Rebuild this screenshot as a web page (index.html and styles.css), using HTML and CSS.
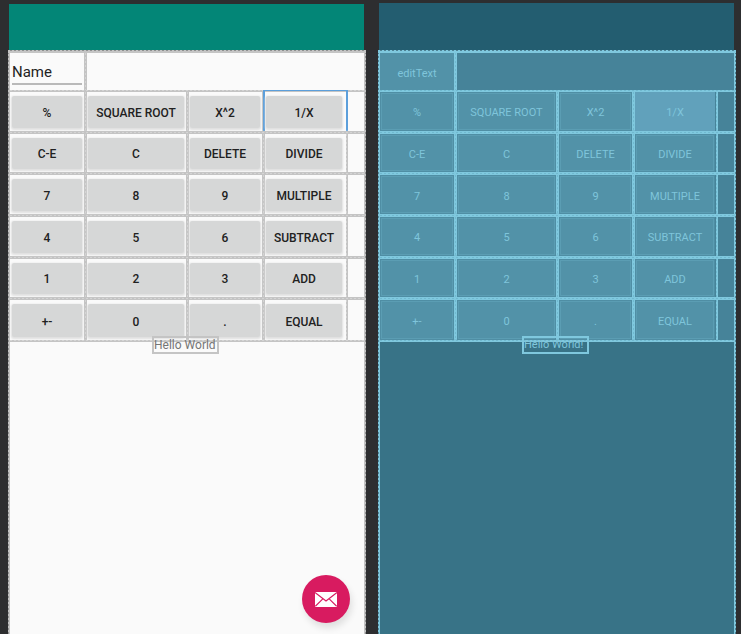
FILE: index.html
```
<!DOCTYPE html>
<html lang="en">
<head>
<meta charset="utf-8">
<title>Calculator layout</title>
<link rel="stylesheet" href="styles.css">
</head>
<body>
<main class="editor">
  <section class="pane design" aria-label="Design">
    <header class="appbar"></header>
    <div class="content">
      <form class="keys">
        <div class="row"><div class="cell field"><input class="name" type="text" value="Name" aria-label="Name"></div></div>
        <div class="row"><div class="cell"><button type="button">%</button></div><div class="cell"><button type="button">SQUARE ROOT</button></div><div class="cell"><button type="button">X^2</button></div><div class="cell selected"><button type="button">1/X</button></div></div>
        <div class="row"><div class="cell"><button type="button">C-E</button></div><div class="cell"><button type="button">C</button></div><div class="cell"><button type="button">DELETE</button></div><div class="cell"><button type="button">DIVIDE</button></div></div>
        <div class="row"><div class="cell"><button type="button">7</button></div><div class="cell"><button type="button">8</button></div><div class="cell"><button type="button">9</button></div><div class="cell"><button type="button">MULTIPLE</button></div></div>
        <div class="row"><div class="cell"><button type="button">4</button></div><div class="cell"><button type="button">5</button></div><div class="cell"><button type="button">6</button></div><div class="cell"><button type="button">SUBTRACT</button></div></div>
        <div class="row"><div class="cell"><button type="button">1</button></div><div class="cell"><button type="button">2</button></div><div class="cell"><button type="button">3</button></div><div class="cell"><button type="button">ADD</button></div></div>
        <div class="row"><div class="cell"><button type="button">+-</button></div><div class="cell"><button type="button">0</button></div><div class="cell"><button type="button">.</button></div><div class="cell"><button type="button">EQUAL</button></div></div>
      </form>
      <p class="hello">Hello World</p>
      <button class="fab" type="button" aria-label="Send mail">
        <svg viewBox="0 0 22 15" width="22" height="15" aria-hidden="true">
          <path fill="#fff" d="M0 0h22v15H0z"/>
          <path fill="none" stroke="#d81b60" stroke-width="1.2" d="M0 .6 11 9 22 .6M.3 14.4 7.8 6.8M21.7 14.4 14.2 6.8"/>
        </svg>
      </button>
    </div>
  </section>
  <section class="pane blueprint" aria-label="Blueprint">
    <header class="appbar"></header>
    <div class="content">
      <form class="keys">
        <div class="row"><div class="cell field"><input class="name" type="text" value="editText" aria-label="editText"></div></div>
        <div class="row"><div class="cell"><button type="button">%</button></div><div class="cell"><button type="button">SQUARE ROOT</button></div><div class="cell"><button type="button">X^2</button></div><div class="cell selected"><button type="button">1/X</button></div></div>
        <div class="row"><div class="cell"><button type="button">C-E</button></div><div class="cell"><button type="button">C</button></div><div class="cell"><button type="button">DELETE</button></div><div class="cell"><button type="button">DIVIDE</button></div></div>
        <div class="row"><div class="cell"><button type="button">7</button></div><div class="cell"><button type="button">8</button></div><div class="cell"><button type="button">9</button></div><div class="cell"><button type="button">MULTIPLE</button></div></div>
        <div class="row"><div class="cell"><button type="button">4</button></div><div class="cell"><button type="button">5</button></div><div class="cell"><button type="button">6</button></div><div class="cell"><button type="button">SUBTRACT</button></div></div>
        <div class="row"><div class="cell"><button type="button">1</button></div><div class="cell"><button type="button">2</button></div><div class="cell"><button type="button">3</button></div><div class="cell"><button type="button">ADD</button></div></div>
        <div class="row"><div class="cell"><button type="button">+-</button></div><div class="cell"><button type="button">0</button></div><div class="cell"><button type="button">.</button></div><div class="cell"><button type="button">EQUAL</button></div></div>
      </form>
      <p class="hello">Hello World!</p>
    </div>
  </section>
</main>
</body>
</html>
```
FILE: styles.css
```
* {
  box-sizing: border-box;
}

body {
  margin: 0;
  background: #2d2e30;
  font-family: Roboto, "Liberation Sans", sans-serif;
}

.editor {
  display: flex;
  gap: 12px;
  min-height: 100vh;
  padding: 0 5px 0 8px;
}

.pane {
  flex: 1;
  display: flex;
  flex-direction: column;
  padding-top: 4px;
}

.design {
  --line: #c4c4c4;
  --dash: #d4d4d4;
  --edge: #8f9090;
  --bar: #038677;
  --screen: #fafafa;
  --table: #fafafa;
}

.blueprint {
  --line: #7fc8de;
  --dash: #70b9cf;
  --edge: #4f8395;
  --bar: #235d70;
  --screen: #387387;
  --table: #468399;
  padding-top: 3px;
}

.appbar {
  flex: 0 0 46px;
  margin: 0 2px 0 1px;
  background: var(--bar);
}

.blueprint .appbar {
  flex-basis: 47px;
}

/* Outlines are a solid line with a row of dashes along it. */
.content {
  position: relative;
  flex: 1;
  padding: 3px 2px 0;
  background:
    repeating-linear-gradient(to right, var(--line) 0 2px, var(--edge) 2px 4px) top / 100% 1px no-repeat,
    linear-gradient(var(--line), var(--line)) 0 1px / 100% 2px no-repeat,
    repeating-linear-gradient(var(--line) 0 2px, var(--edge) 2px 4px) left / 1px 100% no-repeat,
    repeating-linear-gradient(var(--line) 0 2px, var(--edge) 2px 4px) right / 1px 100% no-repeat,
    linear-gradient(var(--line), var(--line)) left / 2px 100% no-repeat,
    linear-gradient(var(--line), var(--line)) right / 2px 100% no-repeat,
    var(--screen);
}

.keys {
  display: grid;
  grid-template-rows: 39px repeat(6, 1fr);
  height: 289px;
  background: var(--table);
}

.row {
  display: grid;
  grid-template-columns: 77fr 102fr 76fr 83fr 16fr;
  min-height: 0;
  padding-bottom: 3px;
  background:
    repeating-linear-gradient(to right, var(--dash) 0 2px, transparent 2px 4px) 0 calc(100% - 1px) / 100% 1px no-repeat,
    linear-gradient(var(--line), var(--line)) bottom / 100% 3px no-repeat;
}

.row:first-child,
.row:last-child {
  padding-bottom: 2px;
  background-size: 100% 1px, 100% 2px;
}

.cell {
  display: grid;
  min-width: 0;
  padding: 4px 5px 3px 1px;
  background:
    repeating-linear-gradient(var(--dash) 0 2px, transparent 2px 4px) calc(100% - 1px) 0 / 1px 100% no-repeat,
    linear-gradient(var(--line), var(--line)) right / 3px 100% no-repeat;
}

.cell:nth-child(4) {
  padding-right: 6px;
  background-size: 1px 100%, 2px 100%;
}

.cell:first-child {
  padding-left: 2px;
}

button,
input {
  min-width: 0;
  margin: 0;
  padding: 0;
  border: 0;
  font-family: inherit;
}

.cell button {
  padding-top: 2px;
  border-radius: 2px;
  background: #d6d7d7;
  box-shadow: 0 1px 2px 1px #e0e0e0;
  color: #212121;
  font-size: 12px;
  font-weight: 500;
  line-height: 14px;
  white-space: nowrap;
}

.cell .name {
  width: 100%;
  height: 28px;
  padding-top: 4px;
  border-bottom: 2px solid #b9b9b9;
  background: transparent;
  color: #222;
  font-size: 15px;
}

.design .selected {
  margin: -2px 0 0 -2px;
  padding: 6px 6px 3px 3px;
  background: linear-gradient(#5c9fdb, #5c9fdb) top / 100% 1px no-repeat,
    linear-gradient(#5c9fdb, #5c9fdb) left / 2px 100% no-repeat,
    linear-gradient(#5c9fdb, #5c9fdb) right / 2px 100% no-repeat;
}

.hello {
  position: absolute;
  top: 286px;
  left: calc(50% - 35px);
  width: 67px;
  margin: 0;
  border: 2px solid var(--line);
  color: #757575;
  font-size: 12px;
  line-height: 14px;
  white-space: nowrap;
}

.fab {
  position: absolute;
  right: 16px;
  bottom: 11px;
  display: grid;
  place-items: center;
  width: 48px;
  height: 48px;
  border-radius: 50%;
  background: #d81b60;
  box-shadow: 2px 5px 7px #0000001c;
}

.blueprint .cell {
  padding: 0 3px 0 0;
}

.blueprint .cell button {
  padding-top: 4px;
  border-radius: 0;
  background: #5292a8;
  box-shadow: inset 0 0 0 1px #4f8ea4, inset 0 0 0 2px #5b9db3;
  color: #7fc5db;
  font-size: 11px;
  font-weight: 400;
}

.blueprint .cell .name {
  height: 100%;
  border: 0;
  background: #5292a8;
  color: #7fc5db;
  font-size: 11px;
  text-align: center;
}

.blueprint .selected button {
  background: #61a1bb;
  box-shadow: none;
}

.blueprint .hello {
  color: #7fc5db;
  font-size: 11px;
}
```
